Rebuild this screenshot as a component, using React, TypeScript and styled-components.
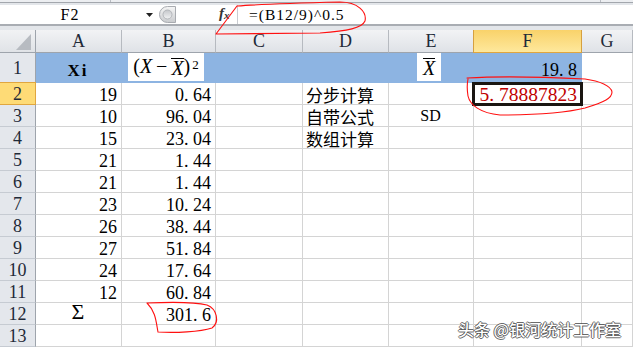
import React from "react";
import styled, { createGlobalStyle } from "styled-components";

const GlobalStyle = createGlobalStyle`
  html, body { margin: 0; padding: 0; background: #fff; }
  body { overflow: hidden; }
  #root { width: 633px; height: 347px; }
  * { box-sizing: border-box; }
`;

const Page = styled.div`
  position: relative;
  width: 633px;
  height: 347px;
  overflow: hidden;
  background: #fff;
  font-family: "Liberation Serif", "Noto Sans CJK SC", serif;
  color: #000;
`;

/* ---------- formula bar ---------- */
const FormulaArea = styled.div`
  display: flex;
  flex-direction: column;
  height: 30px;
  background: #e3e6ea;
`;
const RibbonEdge = styled.div`
  height: 2px;
  background: #eceef1;
  display: flex;
`;
const RibbonTick = styled.div<{ $x: number }>`
  margin-left: ${(p) => p.$x}px;
  width: 1px;
  background: #b9bdc3;
`;
const RibbonLine = styled.div`
  height: 1px;
  background: #a3a7ad;
  margin-bottom: 2px;
`;
const Bar = styled.div`
  display: flex;
  align-items: center;
  height: 21px;
  background: #fff;
  border-bottom: 2px solid #a9adb3;
`;
const NameBox = styled.div`
  width: 140px;
  text-align: center;
  font-family: "Liberation Serif", serif;
  font-size: 16px;
  letter-spacing: 1px;
  line-height: 19px;
`;
const DropZone = styled.div`
  width: 18px;
  display: flex;
  justify-content: center;
  align-items: center;
`;
const GripWrap = styled.div`
  width: 17px;
  height: 17px;
  margin-left: 1px;
  display: flex;
`;
const Fx = styled.div`
  margin-left: 43px;
  width: 18px;
  font-family: "Liberation Serif", serif;
  font-style: italic;
  font-weight: bold;
  font-size: 15px;
  line-height: 19px;
  color: #333;
  sub {
    font-size: 11px;
    vertical-align: -1px;
    font-weight: bold;
  }
`;
const FormulaInput = styled.div`
  flex: 1;
  height: 19px;
  border-left: 1px solid #c9ccd1;
  padding-left: 11px;
  font-family: "Liberation Serif", serif;
  font-size: 15.5px;
  letter-spacing: 1px;
  line-height: 19px;
`;

/* ---------- sheet ---------- */
const Grid = styled.div`
  display: grid;
  grid-template-columns: 36px 86px 94px 87px 86px 85px 108px 1fr;
  grid-template-rows: 23px 30px repeat(12, 22px);
`;

const Corner = styled.div`
  background: linear-gradient(#f1f2f4, #e0e3e7);
  border-right: 1px solid #9ea4ac;
  border-bottom: 1px solid #9ea4ac;
  display: flex;
  align-items: flex-end;
  justify-content: flex-end;
  padding: 0 4px 2px 0;
`;
const CornerTri = styled.div`
  width: 0;
  height: 0;
  border-left: 15px solid transparent;
  border-bottom: 16px solid #b7bbc1;
`;

const ColHead = styled.div<{ $sel?: boolean }>`
  display: flex;
  align-items: center;
  justify-content: center;
  font-size: 18px;
  line-height: 1;
  color: #1f2a38;
  background: ${(p) =>
    p.$sel ? "linear-gradient(#f9d26a, #fee89c)" : "linear-gradient(#f2f3f5, #dfe2e7)"};
  border-right: 1px solid ${(p) => (p.$sel ? "#d6a040" : "#b6bac0")};
  border-bottom: 1px solid ${(p) => (p.$sel ? "#e0a63f" : "#9ea4ac")};
  ${(p) => (p.$sel ? "box-shadow: -1px 0 0 #d6a040;" : "")}
`;

const RowHead = styled.div<{ $sel?: boolean }>`
  display: flex;
  align-items: center;
  justify-content: center;
  font-size: 18px;
  line-height: 1;
  color: #1f2a38;
  background: ${(p) => (p.$sel ? "#fedb76" : "#e4e7ec")};
  border-right: 1px solid ${(p) => (p.$sel ? "#e0a63f" : "#9ea4ac")};
  border-bottom: 1px solid ${(p) => (p.$sel ? "#e0a63f" : "#c6cbd2")};
  ${(p) => (p.$sel ? "box-shadow: 0 -1px 0 #e0a63f;" : "")}
`;

type Align = "left" | "right" | "center";

const Cell = styled.div<{
  $align?: Align;
  $fill?: string;
  $tall?: boolean;
  $active?: boolean;
}>`
  position: relative;
  display: flex;
  align-items: flex-end;
  justify-content: ${(p) =>
    p.$align === "right" ? "flex-end" : p.$align === "center" ? "center" : "flex-start"};
  padding: 0 4px ${(p) => (p.$tall ? "3px" : "0")} 3px;
  font-size: 18px;
  line-height: 1;
  white-space: nowrap;
  background: ${(p) => p.$fill || "#fff"};
  border-right: 1px solid ${(p) => p.$fill || "#d4d4d4"};
  border-bottom: 1px solid ${(p) => p.$fill || "#d4d4d4"};
  ${(p) =>
    p.$active
      ? `
    z-index: 2;
    &::after {
      content: "";
      position: absolute;
      left: -2px; right: -2px; top: -1px; bottom: -2px;
      border: 3px solid #1a1612;
      pointer-events: none;
    }
  `
      : ""}
`;

const EqCell = styled.div<{ $fill: string; $pad: number }>`
  display: flex;
  align-items: stretch;
  padding: 0 0 1px ${(p) => p.$pad}px;
  background: ${(p) => p.$fill};
  border-right: 1px solid ${(p) => p.$fill};
  border-bottom: 1px solid ${(p) => p.$fill};
`;

const EqBox = styled.div<{ $w: number }>`
  width: ${(p) => p.$w}px;
  background: #fff;
  display: flex;
  align-items: flex-end;
  justify-content: center;
  padding-bottom: 5px;
  font-family: "Liberation Serif", serif;
  font-size: 20px;
  line-height: 1;
`;
const It = styled.span`
  font-style: italic;
`;
const Bar1 = styled.span`
  font-style: italic;
  border-top: 1.5px solid #000;
  padding-top: 1px;
  line-height: 0.8;
`;
const Minus = styled.span`
  margin: 0 4px;
`;
const Sup = styled.span`
  align-self: flex-start;
  margin-top: 5px;
  margin-left: 2px;
  font-size: 13px;
  line-height: 1;
`;

const Bold = styled.span`
  font-weight: bold;
  font-size: 17px;
  letter-spacing: 2px;
`;
const Sigma = styled.span`
  font-size: 22px;
  margin-bottom: 1px;
`;
const Cjk = styled.span`
  font-family: "Noto Sans CJK SC", sans-serif;
  font-size: 17px;
  line-height: 1;
  margin-bottom: 1px;
`;
const Plain = styled.span`
  font-size: 16px;
  margin-bottom: 2px;
`;
const NumText = styled.span<{ $red?: boolean }>`
  font-size: ${(p) => (p.$red ? "19.5px" : "18px")};
  color: ${(p) => (p.$red ? "#c00000" : "#000")};
`;
const Dot = styled.span`
  margin-right: 0.25em;
`;

const Watermark = styled.div`
  position: absolute;
  left: 458px;
  top: 318px;
  font-family: "Noto Sans CJK SC", sans-serif;
  font-size: 16px;
  font-weight: 500;
  line-height: 22px;
  color: #fff;
  text-shadow: 1px 0 0 rgba(60, 60, 60, 0.75), -1px 0 0 rgba(60, 60, 60, 0.75),
    0 1px 0 rgba(60, 60, 60, 0.75), 0 -1px 0 rgba(60, 60, 60, 0.75);
  white-space: nowrap;
`;

const Annot = styled.svg`
  position: absolute;
  left: 0;
  top: 0;
  pointer-events: none;
  z-index: 5;
`;

const Num: React.FC<{ v: string; red?: boolean }> = ({ v, red }) => {
  const i = v.indexOf(".");
  if (i < 0) return <NumText $red={red}>{v}</NumText>;
  return (
    <NumText $red={red}>
      {v.slice(0, i)}
      <Dot>.</Dot>
      {v.slice(i + 1)}
    </NumText>
  );
};

type Row = { a?: string; b?: string; d?: string; e?: string; f?: string };
const rows: Row[] = [
  { a: "19", b: "0.64", d: "分步计算", f: "5.78887823" },
  { a: "10", b: "96.04", d: "自带公式", e: "SD" },
  { a: "15", b: "23.04", d: "数组计算" },
  { a: "21", b: "1.44" },
  { a: "21", b: "1.44" },
  { a: "23", b: "10.24" },
  { a: "26", b: "38.44" },
  { a: "27", b: "51.84" },
  { a: "24", b: "17.64" },
  { a: "12", b: "60.84" },
  { a: "Σ", b: "301.6" },
  {},
];

const BLUE = "#8db4e2";
const cols = ["A", "B", "C", "D", "E", "F", "G"];

const Grip = () => (
  <svg width="17" height="17" viewBox="0 0 17 17">
    <defs>
      <linearGradient id="gp" x1="0" y1="0" x2="0" y2="1">
        <stop offset="0" stopColor="#f6f6f6" />
        <stop offset="1" stopColor="#c9cbce" />
      </linearGradient>
      <linearGradient id="gc" x1="0" y1="0" x2="0" y2="1">
        <stop offset="0" stopColor="#c4c6ca" />
        <stop offset="1" stopColor="#f2f3f4" />
      </linearGradient>
    </defs>
    <path d="M8.5 0.5 H16.5 V16.5 H8.5 A8 8 0 0 1 8.5 0.5 Z" fill="url(#gp)" stroke="#a8abb0" />
    <circle cx="8.5" cy="8.5" r="4.5" fill="url(#gc)" stroke="#b3b6ba" />
  </svg>
);

export default function App() {
  return (
    <Page>
      <GlobalStyle />
      <FormulaArea>
        <RibbonEdge>
          <RibbonTick $x={110} />
          <RibbonTick $x={489} />
        </RibbonEdge>
        <RibbonLine />
        <Bar>
          <NameBox>F2</NameBox>
          <DropZone>
            <svg width="7" height="4" viewBox="0 0 7 4">
              <path d="M0 0 H7 L3.5 4 Z" fill="#222" />
            </svg>
          </DropZone>
          <GripWrap>
            <Grip />
          </GripWrap>
          <Fx>
            f<sub>x</sub>
          </Fx>
          <FormulaInput>=(B12/9)^0.5</FormulaInput>
        </Bar>
      </FormulaArea>

      <Grid>
        <Corner>
          <CornerTri />
        </Corner>
        {cols.map((c) => (
          <ColHead key={c} $sel={c === "F"}>
            {c}
          </ColHead>
        ))}

        <RowHead>1</RowHead>
        <Cell $fill={BLUE} $align="center" $tall>
          <Bold>Xi</Bold>
        </Cell>
        <EqCell $fill={BLUE} $pad={6}>
          <EqBox $w={76}>
            (<It>X</It>
            <Minus>−</Minus>
            <Bar1>X</Bar1>)<Sup>2</Sup>
          </EqBox>
        </EqCell>
        <Cell $fill={BLUE} />
        <Cell $fill={BLUE} />
        <EqCell $fill={BLUE} $pad={28}>
          <EqBox $w={24}>
            <Bar1>X</Bar1>
          </EqBox>
        </EqCell>
        <Cell $fill={BLUE} $align="right" $tall>
          <Num v="19.8" />
        </Cell>
        <Cell />

        {rows.map((r, i) => {
          const n = i + 2;
          return (
            <React.Fragment key={n}>
              <RowHead $sel={n === 2}>{n}</RowHead>
              <Cell $align={r.a === "Σ" ? "center" : "right"}>
                {r.a === "Σ" ? <Sigma>Σ</Sigma> : r.a ? <Num v={r.a} /> : null}
              </Cell>
              <Cell $align="right">{r.b ? <Num v={r.b} /> : null}</Cell>
              <Cell />
              <Cell>{r.d ? <Cjk>{r.d}</Cjk> : null}</Cell>
              <Cell $align="center">{r.e ? <Plain>{r.e}</Plain> : null}</Cell>
              <Cell $align="right" $active={n === 2}>
                {r.f ? <Num v={r.f} red /> : null}
              </Cell>
              <Cell />
            </React.Fragment>
          );
        })}
      </Grid>

      <Annot width="633" height="347" viewBox="0 0 633 347">
        <g fill="none" stroke="#ff1010" strokeWidth="1.1" strokeLinecap="round">
          <path d="M216 34 L237 6 C262 4 300 3 340 2 C358 2 367 12 365 21 C362 28 348 31 320 33 L216 34" />
          <path d="M467 78 C500 76 545 77 585 79 C600 81 611 86 612 92 C612 98 605 102 585 108 C565 113 540 115 500 115 C480 113 470 105 468 96 C467 90 467 84 468 79" />
          <path d="M147 303 C170 302 195 302 207 305 C217 309 220 322 212 328 C200 332 175 333 158 332 C156 322 156 312 147 303" />
        </g>
      </Annot>

      <Watermark>头条 @银河统计工作室</Watermark>
    </Page>
  );
}
